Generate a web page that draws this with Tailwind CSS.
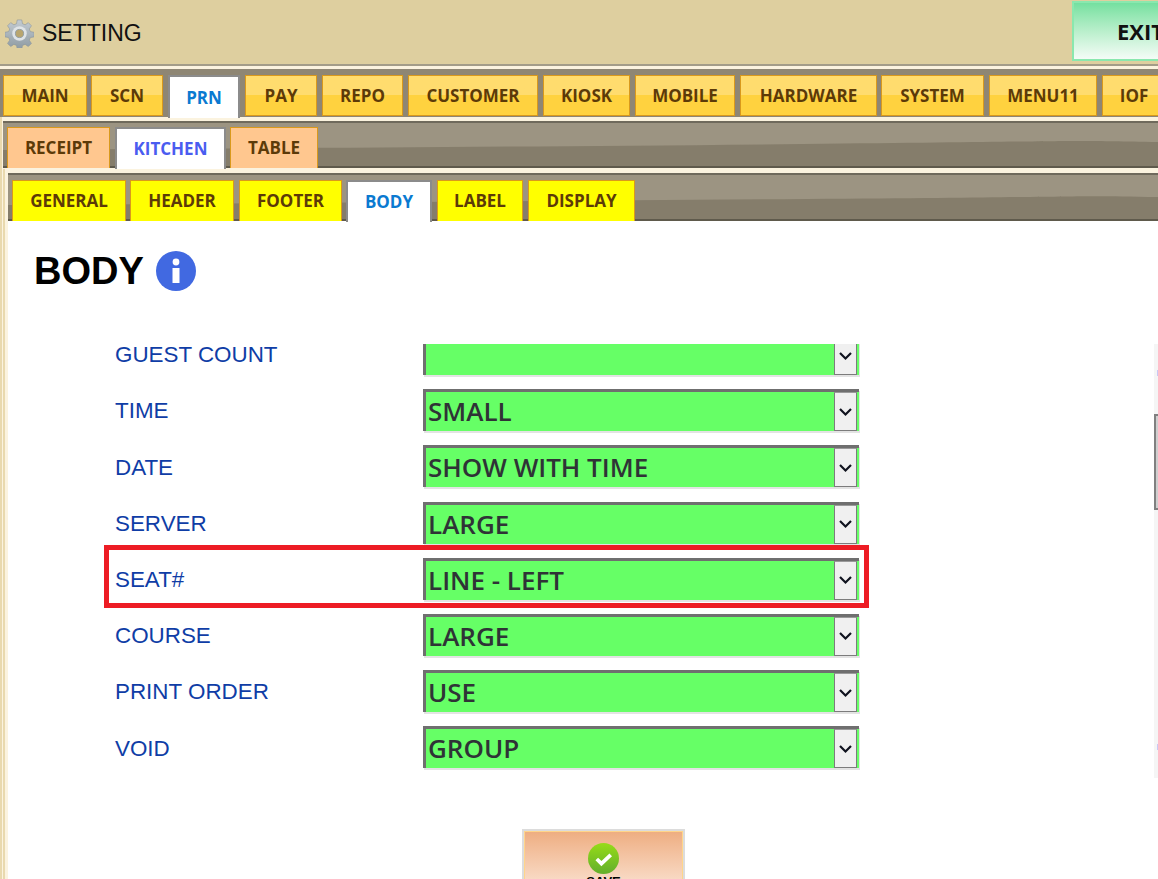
<!DOCTYPE html>
<html lang="en">
<head>
<meta charset="utf-8" />
<title>SETTING</title>
<script src="https://cdn.jsdelivr.net/npm/@tailwindcss/browser@4"></script>
</head>
<body class="bg-white overflow-hidden">
<div class="relative w-[1158px] h-[879px] overflow-hidden bg-white font-['Open_Sans',sans-serif]">

  <!-- top bar -->
  <div class="h-[66px] bg-[#decf9f] border-b-2 border-[#a39c88] flex items-center relative">
    <svg class="ml-[5px] mt-[2px] w-[29px] h-[29px]" viewBox="0 0 32 32">
      <defs>
        <linearGradient id="gear" x1="0" y1="0" x2="0" y2="1">
          <stop offset="0" stop-color="#c4ccd2" />
          <stop offset="1" stop-color="#8d9aa2" />
        </linearGradient>
      </defs>
      <path fill="url(#gear)" stroke="#85919a" stroke-width="0.6" d="M13.5 1h5l.8 4.2 2.9 1.2 3.5-2.4 3.5 3.5-2.4 3.5 1.2 2.9 4.2.8v5l-4.2.8-1.2 2.9 2.4 3.5-3.5 3.5-3.5-2.4-2.9 1.2-.8 4.2h-5l-.8-4.2-2.9-1.2-3.5 2.4-3.5-3.5 2.4-3.5-1.2-2.9-4.2-.8v-5l4.2-.8 1.2-2.9-2.4-3.5 3.5-3.5 3.5 2.4 2.9-1.2z" />
      <circle cx="16" cy="16" r="8" fill="#dfe4e7" />
      <circle cx="16" cy="16" r="4.5" fill="#b9a66f" stroke="#8d9aa2" />
    </svg>
    <span class="ml-[8px] mt-[2px] text-[23px] leading-none text-[#111] font-['Liberation_Sans',sans-serif]">SETTING</span>
    <div class="absolute left-[1072px] top-[1px] w-[86px] h-[60px] border-l-2 border-y-2 border-[#8ae8ae] bg-gradient-to-b from-[#74e0a0] to-[#f4fcf7] pl-[43px] flex items-center overflow-hidden">
      <span class="font-bold text-[22px] leading-none text-[#111]">EXIT</span>
    </div>
  </div>
  <div class="h-[3px] bg-[#fbf3df]"></div>

  <!-- main tabs -->
  <div class="h-[48px] bg-[#8e8674] flex items-end pl-[3px] text-[17px] font-bold text-[#5c3a08]">
    <a class="shrink-0 w-[84px] h-[41px] mb-[1px] pt-[1px] border border-[#d9991c] bg-gradient-to-b from-[#ffdc6e] from-50% to-[#ffd23f] to-50% flex items-center justify-center">MAIN</a>
    <a class="shrink-0 ml-[4px] w-[72px] h-[41px] mb-[1px] pt-[1px] border border-[#d9991c] bg-gradient-to-b from-[#ffdc6e] from-50% to-[#ffd23f] to-50% flex items-center justify-center">SCN</a>
    <a class="shrink-0 ml-[5px] w-[72px] h-[43px] -mb-[1px] border-2 border-b-0 border-[#8b8b8b] bg-white text-[#0a7ad1] flex items-center justify-center">PRN</a>
    <a class="shrink-0 ml-[5px] w-[72px] h-[41px] mb-[1px] pt-[1px] border border-[#d9991c] bg-gradient-to-b from-[#ffdc6e] from-50% to-[#ffd23f] to-50% flex items-center justify-center">PAY</a>
    <a class="shrink-0 ml-[5px] w-[81px] h-[41px] mb-[1px] pt-[1px] border border-[#d9991c] bg-gradient-to-b from-[#ffdc6e] from-50% to-[#ffd23f] to-50% flex items-center justify-center">REPO</a>
    <a class="shrink-0 ml-[5px] w-[130px] h-[41px] mb-[1px] pt-[1px] border border-[#d9991c] bg-gradient-to-b from-[#ffdc6e] from-50% to-[#ffd23f] to-50% flex items-center justify-center">CUSTOMER</a>
    <a class="shrink-0 ml-[5px] w-[87px] h-[41px] mb-[1px] pt-[1px] border border-[#d9991c] bg-gradient-to-b from-[#ffdc6e] from-50% to-[#ffd23f] to-50% flex items-center justify-center">KIOSK</a>
    <a class="shrink-0 ml-[5px] w-[100px] h-[41px] mb-[1px] pt-[1px] border border-[#d9991c] bg-gradient-to-b from-[#ffdc6e] from-50% to-[#ffd23f] to-50% flex items-center justify-center">MOBILE</a>
    <a class="shrink-0 ml-[5px] w-[137px] h-[41px] mb-[1px] pt-[1px] border border-[#d9991c] bg-gradient-to-b from-[#ffdc6e] from-50% to-[#ffd23f] to-50% flex items-center justify-center">HARDWARE</a>
    <a class="shrink-0 ml-[4px] w-[103px] h-[41px] mb-[1px] pt-[1px] border border-[#d9991c] bg-gradient-to-b from-[#ffdc6e] from-50% to-[#ffd23f] to-50% flex items-center justify-center">SYSTEM</a>
    <a class="shrink-0 ml-[5px] w-[108px] h-[41px] mb-[1px] pt-[1px] border border-[#d9991c] bg-gradient-to-b from-[#ffdc6e] from-50% to-[#ffd23f] to-50% flex items-center justify-center">MENU11</a>
    <a class="shrink-0 ml-[5px] w-[64px] h-[41px] mb-[1px] pt-[1px] border border-[#d9991c] bg-gradient-to-b from-[#ffdc6e] from-50% to-[#ffd23f] to-50% flex items-center justify-center">IOF</a>
  </div>

  <div class="pl-[2px] bg-[#e9d9ae]">
    <div class="pl-[1px] bg-[#fbf3df] pt-[4px]">
      <!-- second tabs -->
      <div class="relative h-[47px] border-t-2 border-b-2 border-t-[#6f6a5c] border-b-[#5f5a4c] bg-[#9c9482] flex items-end pl-[4px] text-[17px] font-bold text-[#5c3a08]">
        <svg class="absolute inset-0 w-full h-full" viewBox="0 0 1155 43" preserveAspectRatio="none">
          <path fill="#857d6b" d="M0 27 C300 25 500 24 800 21 S1050 17 1155 19 V43 H0 Z" />
        </svg>
        <a class="relative shrink-0 w-[103px] h-[41px] -mb-[2px] border border-b-0 border-[#d9991c] bg-[#ffc78f] flex items-center justify-center">RECEIPT</a>
        <a class="relative shrink-0 ml-[5px] w-[111px] h-[42px] -mb-[3px] border-2 border-b-0 border-[#8b8b8b] bg-white text-[#4a5cf0] flex items-center justify-center">KITCHEN</a>
        <a class="relative shrink-0 ml-[4px] w-[88px] h-[41px] -mb-[2px] border border-b-0 border-[#d9991c] bg-[#ffc78f] flex items-center justify-center">TABLE</a>
      </div>

      <div class="pl-[2px] bg-[#e9d9ae] mt-[1px]">
        <div class="pl-[3px] bg-[#fbf3df] pt-[4px]">
          <!-- third tabs -->
          <div class="relative h-[48px] border-t-2 border-b-2 border-t-[#6f6a5c] border-b-[#5f5a4c] bg-[#9c9482] flex items-end pl-[4px] text-[17px] font-bold text-[#5c3a08]">
            <svg class="absolute inset-0 w-full h-full" viewBox="0 0 1150 44" preserveAspectRatio="none">
              <path fill="#857d6b" d="M0 30 C300 28 500 26 800 24 S1050 20 1150 22 V44 H0 Z" />
            </svg>
            <a class="relative shrink-0 w-[114px] h-[41px] -mb-[2px] border border-b-0 border-[#d9991c] bg-[#ffff00] flex items-center justify-center">GENERAL</a>
            <a class="relative shrink-0 ml-[4px] w-[104px] h-[41px] -mb-[2px] border border-b-0 border-[#d9991c] bg-[#ffff00] flex items-center justify-center">HEADER</a>
            <a class="relative shrink-0 ml-[5px] w-[103px] h-[41px] -mb-[2px] border border-b-0 border-[#d9991c] bg-[#ffff00] flex items-center justify-center">FOOTER</a>
            <a class="relative shrink-0 ml-[4px] w-[86px] h-[42px] -mb-[3px] border-2 border-b-0 border-[#8b8b8b] bg-white text-[#0a7ad1] flex items-center justify-center">BODY</a>
            <a class="relative shrink-0 ml-[5px] w-[86px] h-[41px] -mb-[2px] border border-b-0 border-[#d9991c] bg-[#ffff00] flex items-center justify-center">LABEL</a>
            <a class="relative shrink-0 ml-[5px] w-[107px] h-[41px] -mb-[2px] border border-b-0 border-[#d9991c] bg-[#ffff00] flex items-center justify-center">DISPLAY</a>
          </div>

          <!-- content -->
          <div class="bg-white h-[660px]">
            <div class="flex items-center pl-[26px] pt-[28px] gap-[12px]">
              <h1 class="font-['Liberation_Sans',sans-serif] font-bold text-[38px] leading-[44px] text-black">BODY</h1>
              <svg class="w-[40px] h-[40px]" viewBox="0 0 40 40">
                <circle cx="20" cy="20" r="20" fill="#4169e1" />
                <circle cx="20" cy="11" r="3.4" fill="#fff" />
                <rect x="16.5" y="17" width="7" height="15" fill="#fff" />
              </svg>
            </div>

            <!-- scrolling list, first row is cut at the top -->
            <div class="relative mt-[51px] h-[434px] overflow-hidden pl-[107px] text-[22.4px] text-[#0f3da6] font-['Liberation_Sans',sans-serif]">
              <div class="-mt-[11px] flex flex-col gap-[14.2px]">
                <div class="flex items-center h-[42px]"><span class="w-[308px] mt-[2px]">GUEST COUNT</span>
                  <div class="w-[436px] h-[42px] flex border-t-[3px] border-l-[3px] border-[#6f6f6f] bg-[#66ff66] shadow-[1px_2px_0_#e3e3e3]"><span class="flex-1 pl-[2px] font-['Open_Sans',sans-serif] font-semibold text-[26px] leading-[39px] text-[#2f3336]"></span><span class="w-[23px] mr-[2px] border border-[#7c7c7c] border-t-[#9a9a9a] bg-[#f0f0f0] flex items-center justify-center"><svg class="w-[15px] h-[10px]" viewBox="0 0 14 10"><path d="M1.5 2 L7 7.5 L12.5 2" fill="none" stroke="#10131f" stroke-width="2.2" /></svg></span></div>
                </div>
                <div class="flex items-center h-[42px]"><span class="w-[308px] mt-[2px]">TIME</span>
                  <div class="w-[436px] h-[42px] flex border-t-[3px] border-l-[3px] border-[#6f6f6f] bg-[#66ff66] shadow-[1px_2px_0_#e3e3e3]"><span class="flex-1 pl-[2px] font-['Open_Sans',sans-serif] font-semibold text-[26px] leading-[39px] text-[#2f3336]">SMALL</span><span class="w-[23px] mr-[2px] border border-[#7c7c7c] border-t-[#9a9a9a] bg-[#f0f0f0] flex items-center justify-center"><svg class="w-[15px] h-[10px]" viewBox="0 0 14 10"><path d="M1.5 2 L7 7.5 L12.5 2" fill="none" stroke="#10131f" stroke-width="2.2" /></svg></span></div>
                </div>
                <div class="flex items-center h-[42px]"><span class="w-[308px] mt-[2px]">DATE</span>
                  <div class="w-[436px] h-[42px] flex border-t-[3px] border-l-[3px] border-[#6f6f6f] bg-[#66ff66] shadow-[1px_2px_0_#e3e3e3]"><span class="flex-1 pl-[2px] font-['Open_Sans',sans-serif] font-semibold text-[26px] leading-[39px] text-[#2f3336]">SHOW WITH TIME</span><span class="w-[23px] mr-[2px] border border-[#7c7c7c] border-t-[#9a9a9a] bg-[#f0f0f0] flex items-center justify-center"><svg class="w-[15px] h-[10px]" viewBox="0 0 14 10"><path d="M1.5 2 L7 7.5 L12.5 2" fill="none" stroke="#10131f" stroke-width="2.2" /></svg></span></div>
                </div>
                <div class="flex items-center h-[42px]"><span class="w-[308px] mt-[2px]">SERVER</span>
                  <div class="w-[436px] h-[42px] flex border-t-[3px] border-l-[3px] border-[#6f6f6f] bg-[#66ff66] shadow-[1px_2px_0_#e3e3e3]"><span class="flex-1 pl-[2px] font-['Open_Sans',sans-serif] font-semibold text-[26px] leading-[39px] text-[#2f3336]">LARGE</span><span class="w-[23px] mr-[2px] border border-[#7c7c7c] border-t-[#9a9a9a] bg-[#f0f0f0] flex items-center justify-center"><svg class="w-[15px] h-[10px]" viewBox="0 0 14 10"><path d="M1.5 2 L7 7.5 L12.5 2" fill="none" stroke="#10131f" stroke-width="2.2" /></svg></span></div>
                </div>
                <div class="flex items-center h-[42px]"><span class="w-[308px] mt-[2px]">SEAT#</span>
                  <div class="w-[436px] h-[42px] flex border-t-[3px] border-l-[3px] border-[#6f6f6f] bg-[#66ff66] shadow-[1px_2px_0_#e3e3e3]"><span class="flex-1 pl-[2px] font-['Open_Sans',sans-serif] font-semibold text-[26px] leading-[39px] text-[#2f3336]">LINE - LEFT</span><span class="w-[23px] mr-[2px] border border-[#7c7c7c] border-t-[#9a9a9a] bg-[#f0f0f0] flex items-center justify-center"><svg class="w-[15px] h-[10px]" viewBox="0 0 14 10"><path d="M1.5 2 L7 7.5 L12.5 2" fill="none" stroke="#10131f" stroke-width="2.2" /></svg></span></div>
                </div>
                <div class="flex items-center h-[42px]"><span class="w-[308px] mt-[2px]">COURSE</span>
                  <div class="w-[436px] h-[42px] flex border-t-[3px] border-l-[3px] border-[#6f6f6f] bg-[#66ff66] shadow-[1px_2px_0_#e3e3e3]"><span class="flex-1 pl-[2px] font-['Open_Sans',sans-serif] font-semibold text-[26px] leading-[39px] text-[#2f3336]">LARGE</span><span class="w-[23px] mr-[2px] border border-[#7c7c7c] border-t-[#9a9a9a] bg-[#f0f0f0] flex items-center justify-center"><svg class="w-[15px] h-[10px]" viewBox="0 0 14 10"><path d="M1.5 2 L7 7.5 L12.5 2" fill="none" stroke="#10131f" stroke-width="2.2" /></svg></span></div>
                </div>
                <div class="flex items-center h-[42px]"><span class="w-[308px] mt-[2px]">PRINT ORDER</span>
                  <div class="w-[436px] h-[42px] flex border-t-[3px] border-l-[3px] border-[#6f6f6f] bg-[#66ff66] shadow-[1px_2px_0_#e3e3e3]"><span class="flex-1 pl-[2px] font-['Open_Sans',sans-serif] font-semibold text-[26px] leading-[39px] text-[#2f3336]">USE</span><span class="w-[23px] mr-[2px] border border-[#7c7c7c] border-t-[#9a9a9a] bg-[#f0f0f0] flex items-center justify-center"><svg class="w-[15px] h-[10px]" viewBox="0 0 14 10"><path d="M1.5 2 L7 7.5 L12.5 2" fill="none" stroke="#10131f" stroke-width="2.2" /></svg></span></div>
                </div>
                <div class="flex items-center h-[42px]"><span class="w-[308px] mt-[2px]">VOID</span>
                  <div class="w-[436px] h-[42px] flex border-t-[3px] border-l-[3px] border-[#6f6f6f] bg-[#66ff66] shadow-[1px_2px_0_#e3e3e3]"><span class="flex-1 pl-[2px] font-['Open_Sans',sans-serif] font-semibold text-[26px] leading-[39px] text-[#2f3336]">GROUP</span><span class="w-[23px] mr-[2px] border border-[#7c7c7c] border-t-[#9a9a9a] bg-[#f0f0f0] flex items-center justify-center"><svg class="w-[15px] h-[10px]" viewBox="0 0 14 10"><path d="M1.5 2 L7 7.5 L12.5 2" fill="none" stroke="#10131f" stroke-width="2.2" /></svg></span></div>
                </div>
              </div>
              <!-- scrollbar at the right edge -->
              <div class="absolute left-[1146px] top-0 bottom-0 w-[4px] bg-[#f5f5f5]">
                <div class="absolute left-[3px] top-[26px] w-[1px] h-[6px] bg-[#c9c9f5]"></div>
                <div class="absolute top-[70px] h-[96px] w-full border-2 border-r-0 border-[#808080] bg-[#cfcfcf]"></div>
                <div class="absolute left-[3px] top-[400px] w-[1px] h-[6px] bg-[#c9c9f5]"></div>
              </div>
            </div>

            <!-- save -->
            <div class="ml-[514px] mt-[51px] w-[163px] h-[70px] border-2 border-[#dcdcdc]">
              <div class="h-full border border-[#ffd58a] bg-gradient-to-b from-[#eeae82] to-[#fbe8da] flex flex-col items-center pt-[11px]">
                <svg class="w-[31px] h-[31px] shrink-0" viewBox="0 0 30 30">
                  <defs>
                    <linearGradient id="ok" x1="0" y1="0" x2="0" y2="1">
                      <stop offset="0" stop-color="#96dc18" />
                      <stop offset="1" stop-color="#62ae2c" />
                    </linearGradient>
                  </defs>
                  <circle cx="15" cy="15" r="15" fill="url(#ok)" />
                  <path d="M8.5 15.5 L13 20 L22 11.5" fill="none" stroke="#fff" stroke-width="3.6" />
                </svg>
                <span class="font-['Liberation_Sans',sans-serif] font-bold text-[13px] leading-[15px] text-black">SAVE</span>
              </div>
            </div>
          </div>
        </div>
      </div>
    </div>
  </div>

  <!-- red annotation box -->
  <div class="absolute left-[104px] top-[545px] w-[765px] h-[63px] border-[5px] border-[#ed1c24]"></div>
</div>
</body>
</html>
